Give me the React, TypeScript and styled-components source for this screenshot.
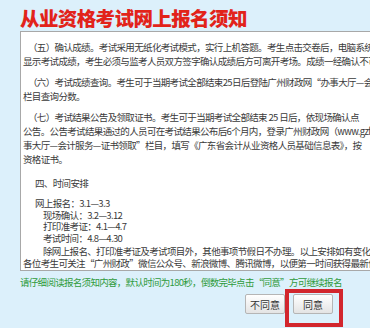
import React from "react";
import styled, { createGlobalStyle } from "styled-components";

const Global = createGlobalStyle`
  html, body { margin: 0; padding: 0; overflow: hidden; }
  body { background: #dcf0fb; font-family: "Noto Sans CJK SC", "Noto Sans", sans-serif; }
`;

const Page = styled.div`
  width: 370px;
  height: 328px;
  overflow: hidden;
  padding: 5px 0 0 20px;
  box-sizing: border-box;
  background: #dcf0fb;
`;

const Title = styled.h1`
  margin: 0;
  height: 26px;
  font-size: 19.5px;
  line-height: 26px;
  font-weight: 900;
  color: #e2231a;
  letter-spacing: -0.6px;
`;

const Box = styled.div`
  width: 400px;
  height: 240px;
  overflow: hidden;
  background: #fff;
  border: 1px solid #a8a8a8;
  box-sizing: border-box;
  padding: 8px 0 0 2px;
`;

const Para = styled.div<{ $gap?: number }>`
  margin-bottom: ${(p) => p.$gap ?? 7}px;
`;

const Line = styled.div<{ $indent?: number; $lh?: number }>`
  white-space: nowrap;
  font-size: 9.5px;
  letter-spacing: -0.65px;
  line-height: ${(p) => p.$lh ?? 14}px;
  color: #3a3a3a;
  padding-left: ${(p) => p.$indent ?? 0}px;
`;

const Notice = styled.div`
  margin-top: 4px;
  font-size: 9.5px;
  letter-spacing: -0.7px;
  line-height: 14px;
  color: #2f9b3b;
  white-space: nowrap;
`;

const ButtonRow = styled.div`
  display: flex;
  gap: 8px;
  margin-top: 5px;
  padding-left: 225px;
`;

const Btn = styled.button`
  position: relative;
  width: 40px;
  height: 20px;
  padding: 0;
  font-family: inherit;
  font-size: 10px;
  color: #333;
  background: linear-gradient(#ffffff, #e4e4e4);
  border: 1px solid #b5b5b5;
  border-radius: 2px;
`;

const Highlight = styled.span`
  position: absolute;
  left: -9px;
  top: -6px;
  width: 58px;
  height: 38px;
  border: 4px solid #d2262d;
  box-sizing: border-box;
  pointer-events: none;
`;

export default function App() {
  return (
    <Page>
      <Global />
      <Title>从业资格考试网上报名须知</Title>
      <Box>
        <Para>
          <Line $indent={5}>（五）确认成绩。考试采用无纸化考试模式，实行上机答题。考生点击交卷后，电脑系统</Line>
          <Line>显示考试成绩，考生必须与监考人员双方签字确认成绩后方可离开考场。成绩一经确认不可更改。</Line>
        </Para>
        <Para>
          <Line $indent={5}>（六）考试成绩查询。考生可于当期考试全部结束25日后登陆广州财政网“办事大厅—会计服务”</Line>
          <Line>栏目查询分数。</Line>
        </Para>
        <Para $gap={10}>
          <Line $indent={5}>（七）考试结果公告及领取证书。考生可于当期考试全部结束 25 日后，依现场确认点</Line>
          <Line>公告。公告考试结果通过的人员可在考试结果公布后6个月内，登录广州财政网（www.gzfinance.gov.cn）</Line>
          <Line>事大厅—会计服务—证书领取”栏目，填写《广东省会计从业资格人员基础信息表》，按</Line>
          <Line>资格证书。</Line>
        </Para>
        <Para $gap={8}>
          <Line $indent={12}>四、时间安排</Line>
        </Para>
        <Para $gap={2}>
          <Line $indent={12} $lh={11.5}>网上报名：3.1—3.3</Line>
          <Line $indent={20} $lh={11.5}>现场确认：3.2—3.12</Line>
          <Line $indent={20} $lh={11.5}>打印准考证：4.1—4.7</Line>
          <Line $indent={20} $lh={11.5}>考试时间：4.8—4.30</Line>
        </Para>
        <Para $gap={0}>
          <Line $indent={20} $lh={11.5}>除网上报名、打印准考证及考试项目外，其他事项节假日不办理。以上安排如有变化</Line>
          <Line $lh={11.5}>各位考生可关注“广州财政”微信公众号、新浪微博、腾讯微博，以便第一时间获得最新信息。</Line>
        </Para>
      </Box>
      <Notice>请仔细阅读报名须知内容，默认时间为180秒，倒数完毕点击“同意”方可继续报名</Notice>
      <ButtonRow>
        <Btn>不同意</Btn>
        <Btn>
          同意
          <Highlight />
        </Btn>
      </ButtonRow>
    </Page>
  );
}
